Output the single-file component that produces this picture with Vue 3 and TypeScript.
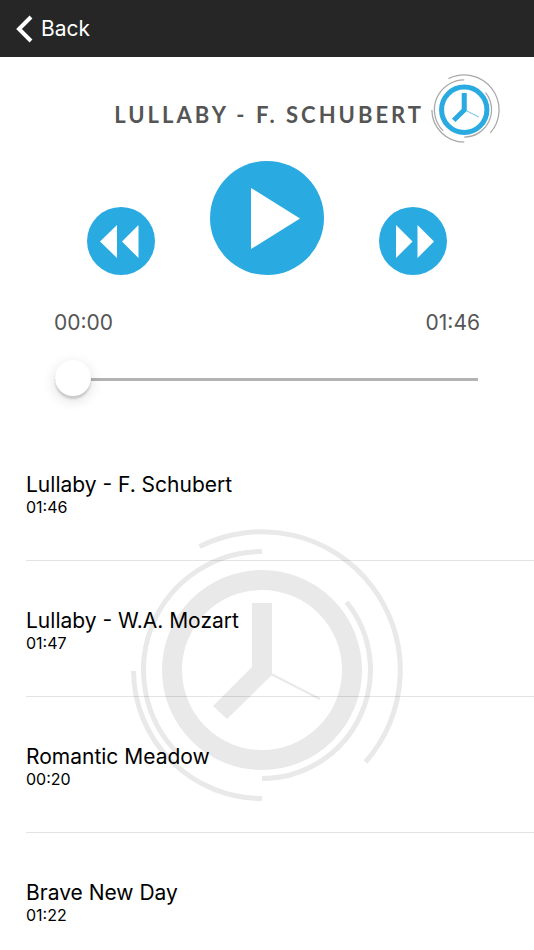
<script setup lang="ts">
import { computed, ref } from 'vue'

interface Track {
  title: string
  seconds: number
}

const tracks: Track[] = [
  { title: 'Lullaby - F. Schubert', seconds: 106 },
  { title: 'Lullaby - W.A. Mozart', seconds: 107 },
  { title: 'Romantic Meadow', seconds: 20 },
  { title: 'Brave New Day', seconds: 82 },
]

const current = ref(0)
const position = ref(0)
const playing = ref(false)
const track = computed(() => tracks[current.value])

function clock(total: number): string {
  const minutes = String(Math.floor(total / 60)).padStart(2, '0')
  const seconds = String(total % 60).padStart(2, '0')
  return `${minutes}:${seconds}`
}

function select(index: number) {
  current.value = (index + tracks.length) % tracks.length
  position.value = 0
}
</script>

<template>
  <div class="page">
    <header class="bar">
      <a class="back" href="#">
        <svg class="chevron" viewBox="0 0 17 28" aria-hidden="true">
          <path d="M15 2 L3 14 L15 26" />
        </svg>
        <span>Back</span>
      </a>
    </header>

    <main>
      <section class="player">
        <div class="heading">
          <h1>{{ track.title }}</h1>
          <svg class="logo" viewBox="-132 -142 274 274" aria-hidden="true">
            <g class="arcs">
              <path d="M0 -118.5 A118.5 118.5 0 0 0 -83.8 83.8" />
              <path d="M-128.5 1 A128.5 128.5 0 0 0 0 128.5" />
              <path d="M0 108.5 A108.5 108.5 0 0 0 84.5 -68" />
              <path d="M-62.5 -123.5 A138.5 138.5 0 0 1 103.5 92" />
            </g>
            <circle class="ring" r="90" />
            <path class="hands" d="M-10 -67 H10 V5 L-35 49 L-49 36 L-10 -3 Z" />
            <path class="second" d="M9 4 L58 29" />
          </svg>
        </div>

        <div class="controls">
          <button class="round" type="button" aria-label="Previous" @click="select(current - 1)">
            <svg viewBox="0 0 68 68" aria-hidden="true">
              <path d="M30 18 V51 L13 34.5 Z M51.5 18 V51 L35 34.5 Z" />
            </svg>
          </button>
          <button class="round large" type="button" aria-label="Play" @click="playing = !playing">
            <svg viewBox="0 0 114 114" aria-hidden="true">
              <path v-if="playing" d="M36 30 H50 V84 H36 Z M64 30 H78 V84 H64 Z" />
              <path v-else d="M41 27 V88 L90 57.5 Z" />
            </svg>
          </button>
          <button class="round" type="button" aria-label="Next" @click="select(current + 1)">
            <svg viewBox="0 0 68 68" aria-hidden="true">
              <path d="M17 18 V51 L33.5 34.5 Z M38.5 18 V51 L55 34.5 Z" />
            </svg>
          </button>
        </div>

        <div class="times">
          <span>{{ clock(position) }}</span>
          <span>{{ clock(track.seconds) }}</span>
        </div>
        <input
          v-model.number="position"
          class="seek"
          type="range"
          min="0"
          :max="track.seconds"
          aria-label="Position"
        />
      </section>

      <section class="library">
        <svg class="watermark" viewBox="-132 -142 274 274" aria-hidden="true">
          <g class="arcs">
            <path d="M0 -118.5 A118.5 118.5 0 0 0 -83.8 83.8" />
            <path d="M-128.5 1 A128.5 128.5 0 0 0 0 128.5" />
            <path d="M0 108.5 A108.5 108.5 0 0 0 84.5 -68" />
            <path d="M-62.5 -123.5 A138.5 138.5 0 0 1 103.5 92" />
          </g>
          <circle class="ring" r="90" />
          <path class="hands" d="M-10 -67 H10 V5 L-35 49 L-49 36 L-10 -3 Z" />
          <path class="second" d="M9 4 L58 29" />
        </svg>
        <ul class="tracks">
          <li v-for="(item, index) in tracks" :key="item.title">
            <button class="track" type="button" @click="select(index)">
              <span class="name">{{ item.title }}</span>
              <span class="length">{{ clock(item.seconds) }}</span>
            </button>
          </li>
        </ul>
      </section>
    </main>
  </div>
</template>

<style>
body {
  margin: 0;
  background: #fff;
}
</style>

<style scoped>
.page {
  font-family: Inter, "Liberation Sans", sans-serif;
  color: #000;
}

button {
  margin: 0;
  padding: 0;
  border: 0;
  background: none;
  font: inherit;
  color: inherit;
  cursor: pointer;
}

.bar {
  display: flex;
  align-items: center;
  height: 57px;
  padding: 0 16px;
  background: #262626;
}

.back {
  display: flex;
  align-items: center;
  gap: 8px;
  color: #fff;
  font-size: 21px;
  line-height: 28px;
  text-decoration: none;
}

.chevron {
  width: 17px;
  height: 28px;
  fill: none;
  stroke: #fff;
  stroke-width: 4;
}

.player {
  display: flex;
  flex-direction: column;
  padding: 17px 34px 0;
}

.heading {
  display: flex;
  align-items: center;
  justify-content: flex-end;
  gap: 7px;
}

h1 {
  margin: 0;
  padding-top: 12px;
  font-family: Lato, "Liberation Sans", sans-serif;
  font-size: 22px;
  font-weight: 700;
  line-height: 28px;
  letter-spacing: 3px;
  text-transform: uppercase;
  color: #555;
}

.logo {
  flex: none;
  width: 69px;
  height: 69px;
}

.arcs,
.ring,
.second {
  fill: none;
}

.logo .arcs {
  stroke: #a8a8a8;
  stroke-width: 5;
}

.logo .ring {
  stroke: #29abe2;
  stroke-width: 20;
}

.logo .hands {
  fill: #29abe2;
}

.logo .second {
  stroke: #29abe2;
  stroke-width: 3;
}

.controls {
  display: flex;
  align-items: flex-end;
  justify-content: center;
  gap: 55px;
  margin-top: 18px;
}

.round {
  flex: none;
  width: 68px;
  height: 68px;
  border-radius: 50%;
  background: #29abe2;
}

.round.large {
  width: 114px;
  height: 114px;
}

.round svg {
  display: block;
  width: 100%;
  height: 100%;
  fill: #fff;
}

.times {
  display: flex;
  justify-content: space-between;
  margin-top: 34px;
  padding: 0 20px;
  font-size: 21px;
  line-height: 28px;
  color: #555;
}

.seek {
  appearance: none;
  height: 36px;
  margin: 24px 22px 28px 21px;
  background: none;
}

.seek::-webkit-slider-runnable-track {
  height: 3px;
  background: #b3b3b3;
}

.seek::-webkit-slider-thumb {
  appearance: none;
  width: 36px;
  height: 36px;
  margin-top: -18px;
  border-radius: 50%;
  background: #fff;
  box-shadow: 0 3px 2px rgba(0, 0, 0, 0.14), 0 4px 14px rgba(0, 0, 0, 0.14);
}

.library {
  position: relative;
}

.watermark {
  position: absolute;
  top: 103px;
  left: 50%;
  width: 274px;
  height: 274px;
  transform: translateX(-50%);
}

.watermark .arcs {
  stroke: #e9e9e9;
  stroke-width: 5;
}

.watermark .ring {
  stroke: #e9e9e9;
  stroke-width: 20;
}

.watermark .hands {
  fill: #e9e9e9;
}

.watermark .second {
  stroke: #e9e9e9;
  stroke-width: 2;
}

.tracks {
  position: relative;
  margin: 0;
  padding: 0 0 0 26px;
  list-style: none;
}

.tracks li {
  border-bottom: 1px solid rgba(0, 0, 0, 0.11);
}

.tracks li:last-child {
  border-bottom: 0;
}

.track {
  display: flex;
  flex-direction: column;
  width: 100%;
  padding: 47px 0 44px;
  text-align: left;
}

.tracks li:last-child .track {
  padding-bottom: 24px;
}

.name {
  font-size: 21px;
  line-height: 26px;
}

.length {
  font-size: 16px;
  line-height: 18px;
}
</style>
